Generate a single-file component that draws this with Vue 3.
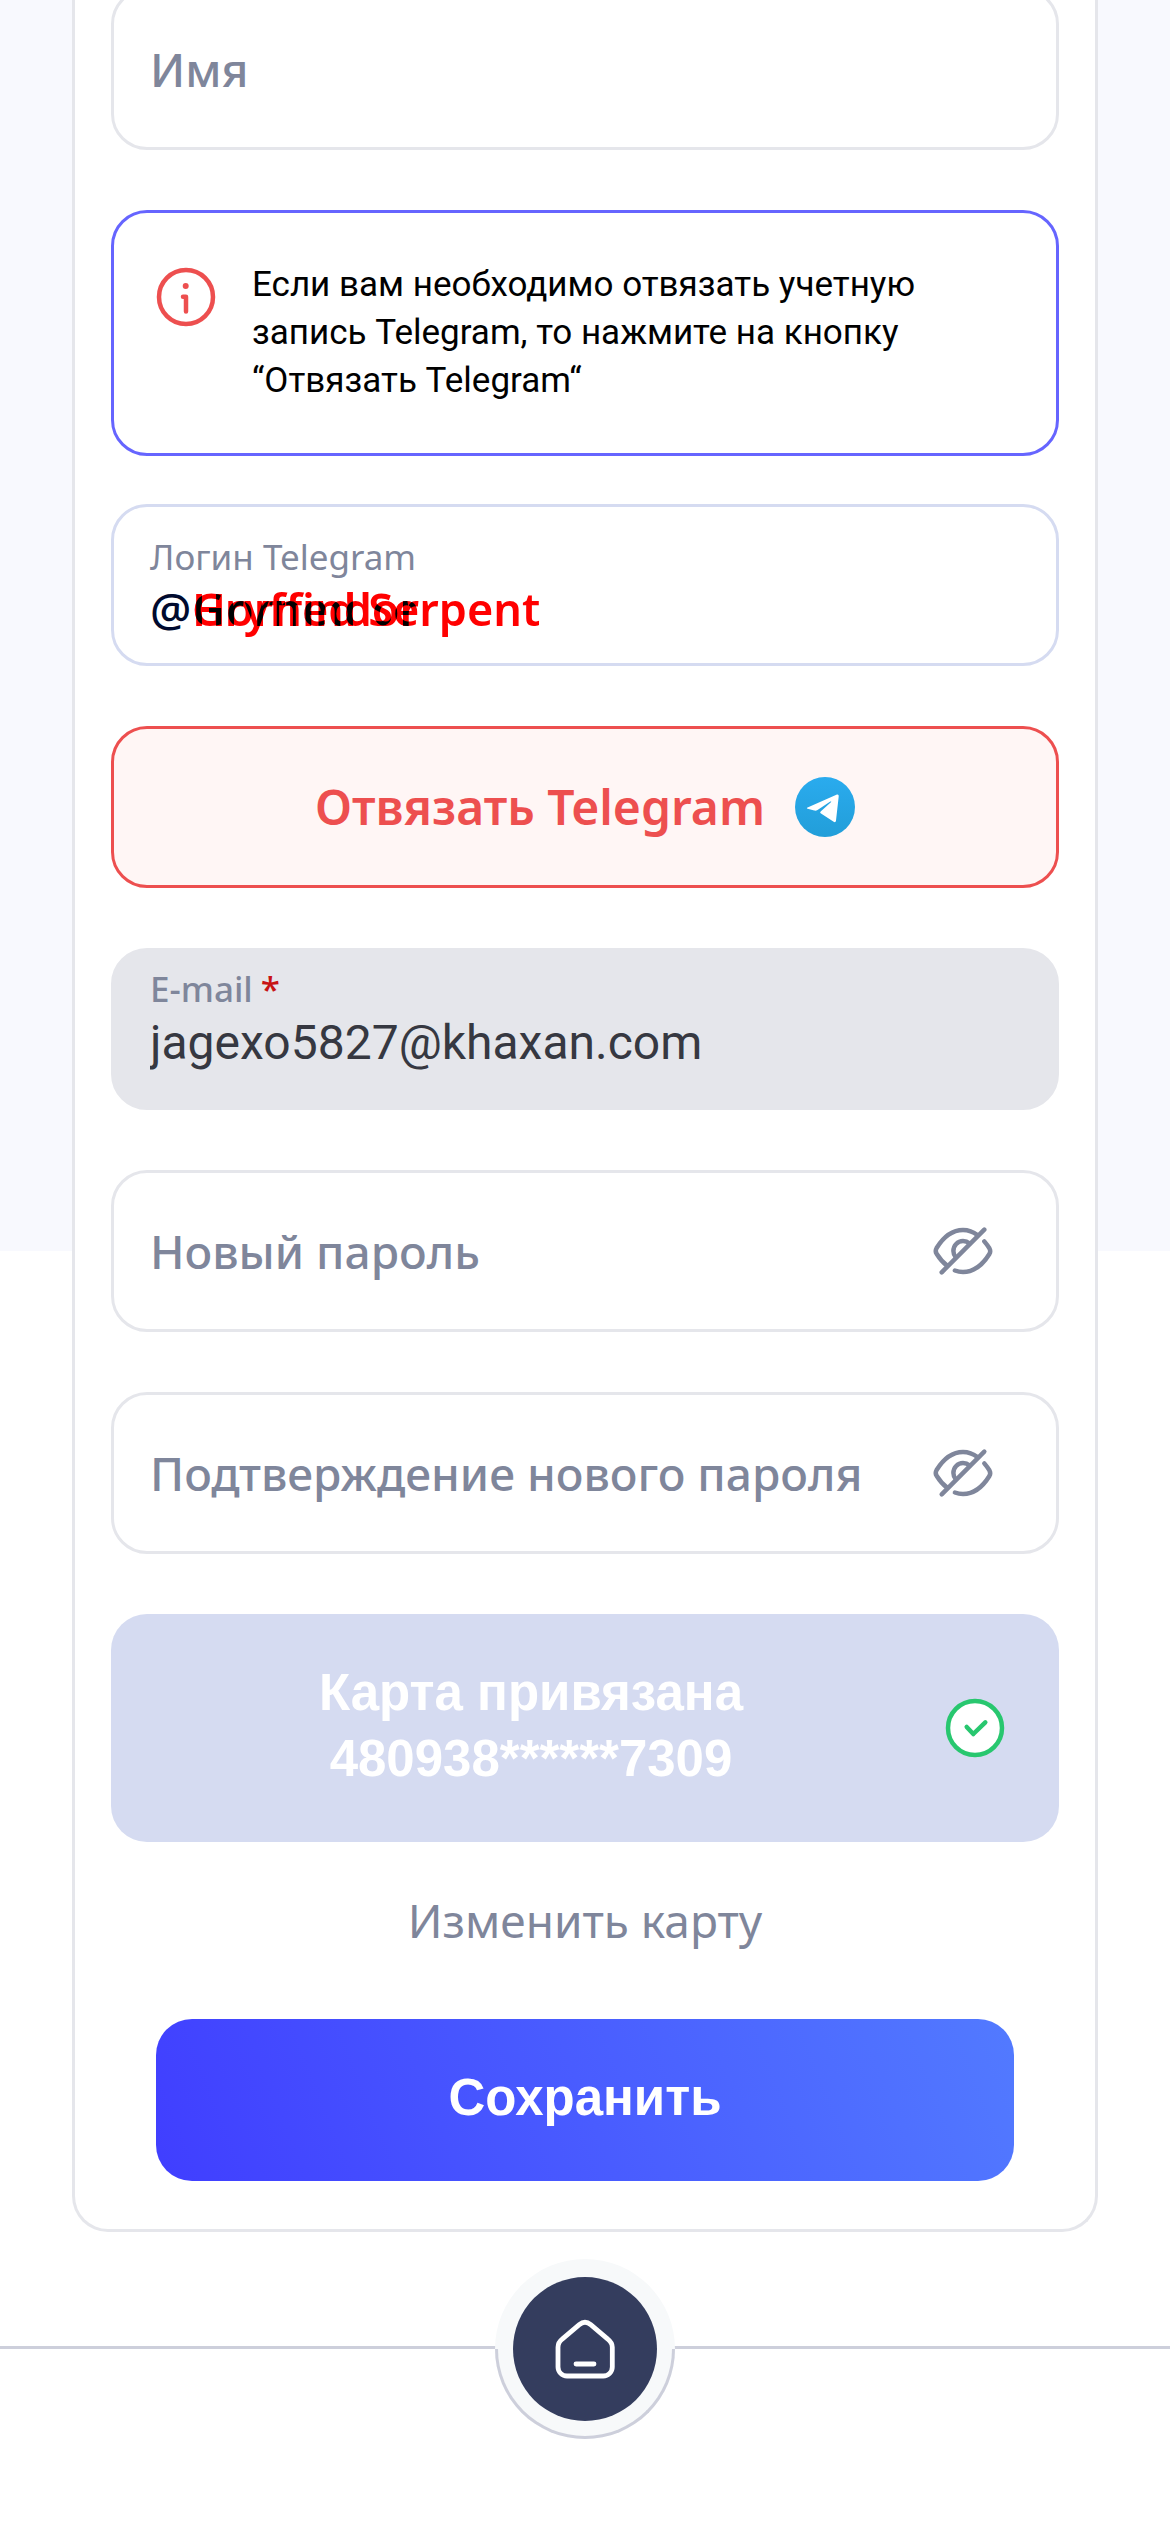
<script setup>
import { ref } from 'vue'

const name = ref('')
const login = ref('@')
const email = ref('jagexo5827@khaxan.com')
const passwords = ref([
  { id: 'new-password', label: 'Новый пароль', value: '', shown: false },
  { id: 'confirm-password', label: 'Подтверждение нового пароля', value: '', shown: false },
])
const houses = ['Gryffindor', 'Horned Serpent']
</script>

<template>
  <div class="page">
    <form class="card" @submit.prevent>
      <div class="field first">
        <input v-model="name" class="control" type="text" placeholder="Имя" aria-label="Имя" />
      </div>

      <div class="notice">
        <svg class="icon" viewBox="0 0 24 24" fill="none" stroke="#ed4f4f" stroke-width="1.5" stroke-linecap="round" stroke-linejoin="round">
          <circle cx="12" cy="12" r="9" />
          <circle cx="11.9" cy="8.3" r="1" fill="#ed4f4f" stroke="none" />
          <path d="M11 11.9h1v4.9" />
        </svg>
        <p>Если вам необходимо отвязать учетную запись Telegram, то нажмите на кнопку “Отвязать Telegram“</p>
      </div>

      <div class="field stacked login">
        <label for="login">Логин Telegram</label>
        <div class="value-row">
          <input id="login" v-model="login" class="control value" type="text" />
          <div class="houses">
            <span v-for="house in houses" :key="house">{{ house }}</span>
          </div>
        </div>
      </div>

      <button class="unlink" type="button">
        <span>Отвязать Telegram</span>
        <svg viewBox="0 0 60 60">
          <defs>
            <linearGradient id="tg" x1="0" y1="0" x2="0" y2="1">
              <stop offset="0" stop-color="#2aabee" />
              <stop offset="1" stop-color="#229ed9" />
            </linearGradient>
          </defs>
          <circle cx="30" cy="30" r="30" fill="url(#tg)" />
          <path fill="#fff" d="M12.600 30.400 41.400 17.800c1.600-.7 2.500.1 2.300 1.800L41 43.600c-.2 1.600-1.200 1.900-2.300 1.100L26 36.600c-1.100-.8-1-1.500-.1-2.400l10-9c.7-.7.2-1.100-.6-.6L22.500 33c-1 .7-2 .9-3.300.6l-6.500-1.800c-1.100-.4-1.100-.9-.1-1.400z" />
        </svg>
      </button>

      <div class="field stacked email">
        <label for="email">E-mail<span class="required">*</span></label>
        <input id="email" v-model="email" class="control value" type="email" disabled />
      </div>

      <div v-for="p in passwords" :key="p.id" class="field">
        <input :id="p.id" v-model="p.value" class="control" :type="p.shown ? 'text' : 'password'" :placeholder="p.label" :aria-label="p.label" />
        <button class="eye" type="button" aria-label="Показать пароль" @click="p.shown = !p.shown">
          <svg class="icon" viewBox="0 0 24 24" fill="none" stroke="#7f869b" stroke-width="1.5" stroke-linecap="round" stroke-linejoin="round">
            <path d="M19.1 4.9 4.9 19.1" />
            <path d="M16.8 6.7C15.4 5.6 13.7 5 12 5 8.6 5 5.5 7.300 3.200 11c-.4.7-.4 1.300 0 1.900 1 1.600 2.100 2.900 3.400 3.900" />
            <path d="M19.1 8.8c.6.7 1.200 1.500 1.700 2.300.4.7.4 1.200 0 1.900C18.500 16.700 15.400 19 12 19c-1 0-1.900-.2-2.700-.5" />
            <path d="M14.2 9.5c-.6-.5-1.400-.8-2.200-.8-1.800 0-3.200 1.500-3.200 3.300 0 .8.300 1.500.8 2.100" />
          </svg>
        </button>
      </div>

      <button class="bank" type="button">
        <span>Карта привязана<br />480938******7309</span>
        <svg viewBox="0 0 60 60" fill="none" stroke="#28c76f" stroke-width="4.5" stroke-linecap="round" stroke-linejoin="round">
          <circle cx="30" cy="30" r="27" fill="#fff" />
          <path d="m21.7 29 6.600 7 12-11.700" />
        </svg>
      </button>

      <a class="change" href="#">Изменить карту</a>
      <button class="save" type="submit">Сохранить</button>
    </form>

    <nav class="bar">
      <div class="home-ring">
        <a class="home" href="#" aria-label="Главная">
          <svg class="icon" viewBox="0 0 24 24" fill="none" stroke="#fff" stroke-width="1.6" stroke-linecap="round" stroke-linejoin="round">
            <path d="M3 11.4c0-1.200.5-2 1.400-2.700l5.700-4.800c1.300-1.100 2.500-1.100 3.800 0l5.700 4.800c.9.700 1.500 1.500 1.500 2.700V18a3 3 0 0 1-3 3H6a3 3 0 0 1-3-3z" />
            <path d="M9 17h6" />
          </svg>
        </a>
      </div>
    </nav>
  </div>
</template>

<style>
body {
  margin: 0;
  background: #fff;
}
</style>

<style scoped>
.page {
  --muted: #7f869b;
  --line: #e5e6eb;
  --lilac: #d5dbf1;
  overflow: hidden;
  font-family: "Noto Sans", "Open Sans", sans-serif;
  background: linear-gradient(#f8f9fe, #f8f9fe) top / 100% 1251px no-repeat;
}
.card {
  display: flex;
  flex-direction: column;
  margin: 0 72px;
  padding: 0 36px 48px;
  background: #fff;
  border: 3px solid var(--line);
  border-top: 0;
  border-radius: 0 0 36px 36px;
}
.field {
  display: flex;
  align-items: center;
  box-sizing: border-box;
  min-height: 162px;
  margin-bottom: 60px;
  padding: 0 57px 0 36px;
  border: 3px solid var(--line);
  border-radius: 36px;
}
.first {
  margin-top: -12px;
}
.stacked {
  flex-direction: column;
  align-items: stretch;
}
.login {
  padding-top: 26px;
  border-color: var(--lilac);
}
.email {
  padding-top: 14px;
  background: var(--line);
}
.control {
  flex: 1;
  min-width: 0;
  padding: 0;
  border: 0;
  outline: 0;
  background: none;
  font: 500 46px/60px "Noto Sans", "Open Sans", sans-serif;
  color: #000a2e;
}
.control::placeholder {
  color: var(--muted);
  opacity: 1;
}
.stacked label {
  font-size: 35px;
  line-height: 48px;
  color: var(--muted);
}
.email label {
  font-weight: 500;
}
.required {
  margin-left: 8px;
  color: #c81414;
}
.value {
  flex: none;
  width: 100%;
  line-height: 56px;
  height: 56px;
}
.email .value {
  height: 60px;
  font: 400 48px/60px Roboto, sans-serif;
  color: #363841;
}
.value-row {
  position: relative;
}
.houses {
  position: absolute;
  inset: 0 auto auto 42px;
  isolation: isolate;
  display: grid;
  font-size: 45px;
  font-weight: 600;
  line-height: 56px;
  white-space: nowrap;
  color: #f00;
  pointer-events: none;
}
.houses span {
  grid-area: 1 / 1;
  mix-blend-mode: difference;
}
.notice {
  display: flex;
  gap: 30px;
  margin-bottom: 48px;
  padding: 48px 36px;
  border: 3px solid #6665ff;
  border-radius: 36px;
}
.notice p {
  flex: 1;
  margin: 0;
  padding-right: 60px;
  font: 400 35px/48px Roboto, sans-serif;
  color: #000;
}
.icon {
  display: block;
  flex: none;
  width: 72px;
  height: 72px;
}
button {
  border: 0;
  padding: 0;
  cursor: pointer;
}
.unlink {
  display: flex;
  align-items: center;
  justify-content: center;
  gap: 30px;
  min-height: 162px;
  margin-bottom: 60px;
  border: 3px solid #ed4f4f;
  border-radius: 36px;
  background: #fff6f5;
  font: 600 48px/66px "Noto Sans", "Open Sans", sans-serif;
  color: #ed4f4f;
}
.unlink svg,
.bank svg {
  display: block;
  flex: none;
  width: 60px;
  height: 60px;
}
.eye {
  background: none;
}
.bank {
  display: flex;
  align-items: center;
  gap: 48px;
  min-height: 228px;
  margin-bottom: 48px;
  padding: 0 54px;
  border-radius: 36px;
  background: var(--lilac);
}
.bank span {
  flex: 1;
  padding-bottom: 4px;
}
.bank,
.save {
  font: 700 51px/66px "Liberation Sans", sans-serif;
  color: #fff;
}
.change {
  align-self: center;
  margin-bottom: 69px;
  font-size: 46px;
  line-height: 60px;
  color: var(--muted);
  text-decoration: none;
}
.save {
  min-height: 162px;
  margin: 0 45px;
  padding-bottom: 4px;
  border-radius: 36px;
  background: linear-gradient(68deg, #403eff, #527aff);
}
.bar {
  display: flex;
  justify-content: center;
  align-items: flex-start;
  min-height: 183px;
  margin-top: 114px;
  border-top: 3px solid #cdcfdb;
}
.home-ring {
  position: relative;
  margin-top: -90px;
  padding: 18px;
  border-radius: 50%;
  background: #f7f9fa;
}
.home-ring::before {
  content: "";
  position: absolute;
  inset: 50% 0 0;
  border: 3px solid #cdcfdb;
  border-top: 0;
  border-radius: 0 0 90px 90px;
}
.home {
  position: relative;
  display: block;
  padding: 36px;
  border-radius: 50%;
  background: #343d5e;
}
</style>
